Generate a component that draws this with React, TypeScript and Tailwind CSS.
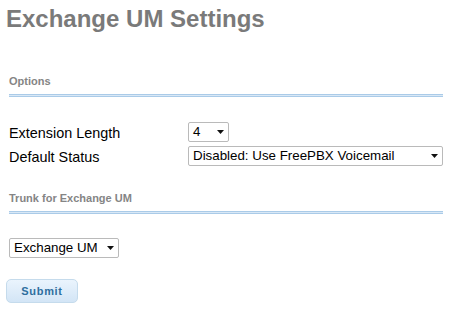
function Select({ value, width }: { value: string; width: string }) {
  return (
    <div
      className={`${width} h-[20px] flex items-center justify-between border border-[#bababa] rounded-[2px] bg-white pl-[4px] pr-[4px] text-[13.33px] leading-none text-black`}
    >
      <span className="whitespace-nowrap">{value}</span>
      <svg width="7" height="4" viewBox="0 0 7 4" className="shrink-0">
        <path d="M0 0 H7 L3.5 4 Z" fill="#111" />
      </svg>
    </div>
  )
}

function Section({ title }: { title: string }) {
  return (
    <div>
      <h5 className="text-[11px] leading-[13px] font-bold text-[#858585]">{title}</h5>
      <div className="mt-[6px] w-[434px] h-[3px] border-y border-[#aacbe8] bg-[#d9e8f6]" />
    </div>
  )
}

export default function App() {
  return (
    <div className="w-[458px] h-[312px] bg-white font-['Liberation_Sans',Arial,sans-serif]">
      <h1 className="pl-[6px] pt-[5px] text-[24px] leading-[28px] font-bold text-[#7a7a7a]">
        Exchange UM Settings
      </h1>

      <div className="pl-[9px]">
        <div className="mt-[42px]">
          <Section title="Options" />
        </div>

        <div className="mt-[25px] flex flex-col gap-[4px]">
          <div className="flex h-[20px] items-start">
            <span className="w-[179px] text-[14.4px] leading-[22px] text-black">Extension Length</span>
            <Select value="4" width="w-[41px]" />
          </div>
          <div className="flex h-[20px] items-start">
            <span className="w-[179px] text-[14.4px] leading-[22px] text-black">Default Status</span>
            <Select value="Disabled: Use FreePBX Voicemail" width="w-[255px]" />
          </div>
        </div>

        <div className="mt-[26px]">
          <Section title="Trunk for Exchange UM" />
        </div>

        <div className="mt-[24px]">
          <Select value="Exchange UM" width="w-[110px]" />
        </div>
      </div>

      <button className="ml-[6px] mt-[21px] w-[72px] h-[24px] rounded-[5px] border border-[#c5dbec] bg-gradient-to-b from-[#eaf4fd] to-[#d3e5f6] text-[11px] font-bold tracking-[0.7px] text-[#2e6e9e]">
        Submit
      </button>
    </div>
  )
}
